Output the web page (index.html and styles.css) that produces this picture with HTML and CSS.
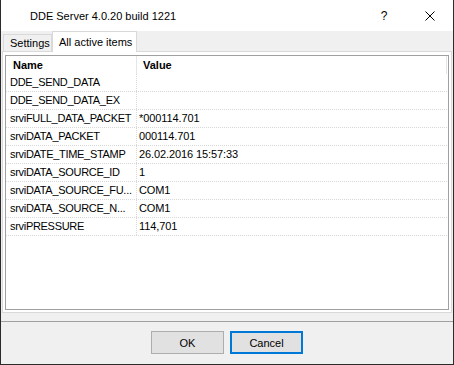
FILE: index.html
```html
<!DOCTYPE html>
<html>
<head>
<meta charset="utf-8">
<link rel="stylesheet" href="styles.css">
</head>
<body>
<div class="window">
  <div class="titlebar">
    <span class="title">DDE Server 4.0.20 build 1221</span>
    <div class="caption-buttons">
      <div class="cap-btn help">?</div>
      <div class="cap-btn close">
        <svg width="10" height="10" viewBox="0 0 10 10"><path d="M0.5 0.5 L9.5 9.5 M9.5 0.5 L0.5 9.5" stroke="#000" stroke-width="1" fill="none"/></svg>
      </div>
    </div>
  </div>
  <div class="tabstrip">
    <div class="tab">Settings</div>
    <div class="tab active">All active items</div>
  </div>
  <div class="page">
    <div class="list">
      <div class="header">
        <div class="hcell name">Name</div>
        <div class="hcell value">Value</div>
      </div>
      <div class="row"><div class="cell name">DDE_SEND_DATA</div><div class="cell value"></div></div>
      <div class="row"><div class="cell name">DDE_SEND_DATA_EX</div><div class="cell value"></div></div>
      <div class="row"><div class="cell name">srviFULL_DATA_PACKET</div><div class="cell value">*000114.701</div></div>
      <div class="row"><div class="cell name">srviDATA_PACKET</div><div class="cell value">000114.701</div></div>
      <div class="row"><div class="cell name">srviDATE_TIME_STAMP</div><div class="cell value">26.02.2016 15:57:33</div></div>
      <div class="row"><div class="cell name">srviDATA_SOURCE_ID</div><div class="cell value">1</div></div>
      <div class="row"><div class="cell name">srviDATA_SOURCE_FU...</div><div class="cell value">COM1</div></div>
      <div class="row"><div class="cell name">srviDATA_SOURCE_N...</div><div class="cell value">COM1</div></div>
      <div class="row"><div class="cell name">srviPRESSURE</div><div class="cell value">114,701</div></div>
    </div>
  </div>
  <div class="footer">
    <button class="btn">OK</button>
    <button class="btn default">Cancel</button>
  </div>
</div>
</body>
</html>
```
FILE: styles.css
```css
html, body {
  margin: 0;
  padding: 0;
}
body {
  font-family: "Liberation Sans", Arial, sans-serif;
  font-size: 11px;
  color: #000;
  background: #f0f0f0;
}
.window {
  width: 454px;
  height: 365px;
  box-sizing: border-box;
  border: 1px solid #2b2b2b;
  border-top: 0;
  background: #f0f0f0;
  display: flex;
  flex-direction: column;
}
.titlebar {
  height: 31px;
  background: #fff;
  display: flex;
  align-items: center;
  flex: none;
}
.title {
  margin-left: 29px;
  font-size: 11px;
  line-height: 14px;
  padding-top: 1px;
}
.caption-buttons {
  margin-left: auto;
  display: flex;
  height: 31px;
}
.cap-btn {
  width: 46px;
  height: 31px;
  display: flex;
  align-items: center;
  justify-content: center;
}
.help {
  font-size: 12px;
}
.close svg {
  display: block;
}
.tabstrip {
  height: 20px;
  flex: none;
  display: flex;
  align-items: flex-end;
  padding-left: 2px;
  position: relative;
  z-index: 1;
}
.tab {
  box-sizing: border-box;
  height: 17px;
  width: 49px;
  border: 1px solid #d9d9d9;
  border-bottom: 0;
  padding-left: 6px;
  display: flex;
  align-items: center;
  font-size: 11px;
  background: #f0f0f0;
}
.tab.active {
  width: 85px;
  height: 21px;
  margin-bottom: -1px;
  background: #fff;
}
.page {
  flex: none;
  height: 262px;
  box-sizing: border-box;
  margin: 0 1px 8px 1px;
  border: 1px solid #d9d9d9;
  background: #fff;
  padding: 3px 2px 2px 2px;
  display: flex;
}
.list {
  flex: 1;
  border: 1px solid #a0a0a0;
  background: #fff;
  overflow: hidden;
}
.header {
  display: flex;
  height: 18px;
  width: 441px;
}
.hcell {
  box-sizing: border-box;
  font-weight: bold;
  line-height: 18px;
  border-right: 1px solid #e5e5e5;
}
.hcell.name {
  width: 131px;
  padding-left: 7px;
}
.hcell.value {
  width: 310px;
  padding-left: 6px;
}
.row {
  display: flex;
  width: 441px;
  height: 18px;
  box-sizing: border-box;
  border-bottom: 1px dotted #d8d8d8;
}
.cell {
  box-sizing: border-box;
  line-height: 17px;
  white-space: nowrap;
  overflow: hidden;
}
.cell.name {
  width: 131px;
  padding-left: 4px;
  letter-spacing: -0.3px;
  border-right: 1px dotted #d8d8d8;
}
.cell.value {
  width: 310px;
  padding-left: 2px;
  letter-spacing: -0.1px;
}
.footer {
  flex: 1;
  border-top: 1px solid #a0a0a0;
  display: flex;
  justify-content: center;
  align-items: flex-start;
  padding-top: 9px;
  gap: 6px;
}
.btn {
  box-sizing: border-box;
  width: 73px;
  height: 23px;
  margin: 0;
  padding: 0;
  border: 1px solid #adadad;
  background: #e1e1e1;
  font-family: "Liberation Sans", Arial, sans-serif;
  font-size: 11px;
  color: #000;
}
.btn.default {
  border: 2px solid #0078d7;
}
```
